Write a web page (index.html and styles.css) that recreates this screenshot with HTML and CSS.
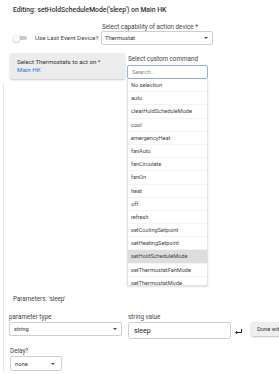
FILE: index.html
```html
<!DOCTYPE html>
<html>
<head>
<meta charset="utf-8">
<link rel="stylesheet" href="styles.css">
</head>
<body>
<div class="title">Editing: setHoldScheduleMode('sleep') on Main HK</div>
<div class="row1">
  <div class="toggle-wrap">
    <span class="toggle"><span class="knob"></span></span>
    <span class="tlabel">Use Last Event Device?</span>
  </div>
  <div class="field">
    <div class="label">Select capability of action device *</div>
    <div class="select sel-cap"><span>Thermostat</span><span class="caret"></span></div>
  </div>
</div>
<div class="row2">
  <div class="leftcol">
    <div class="card">
      <div class="card-title">Select Thermostats to act on *</div>
      <div class="card-link">Main HK</div>
    </div>
    <div class="rail"></div>
  </div>
  <div class="cmd">
    <div class="label">Select custom command</div>
    <div class="search">Search...</div>
    <ul class="list">
      <li>No selection</li>
      <li>auto</li>
      <li>clearHoldScheduleMode</li>
      <li>cool</li>
      <li>emergencyHeat</li>
      <li>fanAuto</li>
      <li>fanCirculate</li>
      <li>fanOn</li>
      <li>heat</li>
      <li>off</li>
      <li>refresh</li>
      <li>setCoolingSetpoint</li>
      <li>setHeatingSetpoint</li>
      <li class="active">setHoldScheduleMode</li>
      <li>setThermostatFanMode</li>
      <li>setThermostatMode</li>
    </ul>
  </div>
</div>
<div class="params">
  <div class="ptitle">Parameters: 'sleep'</div>
  <div class="prow">
    <div class="pfield">
      <div class="label">parameter type</div>
      <div class="select sel-type"><span>string</span><span class="caret"></span></div>
    </div>
    <div class="pfield">
      <div class="label">string value</div>
      <div class="input">sleep</div>
    </div>
    <svg class="enter" width="8" height="6" viewBox="0 0 8 6"><path d="M6.5 0 V3.5 H1.5" fill="none" stroke="#222" stroke-width="1"/><path d="M0 3.5 L2.2 1.8 V5.2 Z" fill="#222"/></svg>
    <div class="btn">Done with params</div>
  </div>
  <div class="dfield">
    <div class="label">Delay?</div>
    <div class="select sel-delay"><span>none</span><span class="caret"></span></div>
  </div>
</div>
</body>
</html>
```

FILE: styles.css
```css
html, body {
  margin: 0;
  padding: 0;
  overflow: hidden;
  background: #fff;
}
body {
  font-family: Roboto, "Liberation Sans", sans-serif;
  color: #333;
  width: 279px;
  height: 374px;
}
.title {
  padding: 5px 0 0 13px;
  font-size: 6.8px;
  font-weight: 500;
  line-height: 10px;
  color: #333;
  white-space: nowrap;
}
.label {
  font-size: 6.3px;
  line-height: 8px;
  color: #444;
  white-space: nowrap;
}
.row1 {
  display: flex;
  align-items: flex-end;
  margin-top: 8px;
}
.toggle-wrap {
  width: 88px;
  height: 14px;
  padding-left: 13px;
  display: flex;
  align-items: center;
  gap: 8px;
  box-sizing: content-box;
}
.toggle {
  position: relative;
  width: 14px;
  height: 7px;
  display: flex;
  align-items: center;
}
.toggle::before {
  content: "";
  display: block;
  margin-left: 3px;
  width: 11px;
  height: 4px;
  border-radius: 2px;
  background: #c9c9c9;
}
.knob {
  position: absolute;
  left: 0;
  top: 0;
  width: 7px;
  height: 7px;
  border-radius: 50%;
  background: #fafafa;
  box-shadow: 0 0.5px 1.5px rgba(0,0,0,0.35);
}
.tlabel {
  font-size: 6.2px;
  color: #444;
  white-space: nowrap;
}
.field .label {
  padding-left: 1px;
}
.select {
  box-sizing: border-box;
  height: 14px;
  border: 1px solid #cfcfcf;
  border-radius: 2px;
  background: #fff;
  display: flex;
  align-items: center;
  justify-content: space-between;
  padding: 0 4px 0 3px;
  font-size: 5.8px;
  color: #333;
}
.caret {
  width: 0;
  height: 0;
  border-left: 2px solid transparent;
  border-right: 2px solid transparent;
  border-top: 2.5px solid #444;
}
.sel-cap {
  width: 112px;
}
.row2 {
  display: flex;
  margin-top: 8px;
}
.leftcol {
  margin-left: 3px;
  display: flex;
  flex-direction: column;
}
.card {
  margin-left: 7px;
  width: 115px;
  height: 26px;
  box-sizing: border-box;
  background: #ececec;
  border-radius: 2px;
  box-shadow: 0 1px 2px rgba(0,0,0,0.22);
  padding: 5px 0 0 7px;
}
.card-title {
  font-size: 6.2px;
  line-height: 8px;
  color: #333;
  white-space: nowrap;
}
.card-link {
  font-size: 6.2px;
  line-height: 8px;
  color: #2b72d6;
}
.rail {
  flex: 1;
  border-left: 1px solid #e6e6e6;
  margin-top: 4px;
}
.cmd {
  margin-left: 2px;
  margin-top: 2px;
  width: 81px;
}
.cmd .label {
  line-height: 9px;
  padding-left: 1px;
  margin-bottom: 1px;
}
.search {
  box-sizing: border-box;
  height: 14px;
  border: 1px solid #8fb2e6;
  border-radius: 2px;
  font-size: 6.2px;
  color: #888;
  display: flex;
  align-items: center;
  padding-left: 4px;
}
.list {
  list-style: none;
  margin: 0;
  padding: 0;
  height: 207px;
  overflow: hidden;
  border: 1px solid #e2e2e2;
  border-top: none;
  box-shadow: 0 1px 2px rgba(0,0,0,0.12);
  box-sizing: border-box;
}
.list li {
  height: 13.2px;
  box-sizing: border-box;
  border-bottom: 1px solid #f3f3f3;
  font-size: 5.6px;
  line-height: 12.2px;
  padding-left: 3px;
  color: #444;
  white-space: nowrap;
}
.list li.active {
  background: #dddddd;
}
.params {
  margin-left: 3px;
  border-left: 1px solid #e6e6e6;
  padding: 9px 0 1px 5px;
  overflow: hidden;
}
.ptitle {
  padding-left: 4px;
  font-size: 6.3px;
  line-height: 8px;
  color: #444;
}
.prow {
  display: flex;
  align-items: flex-end;
  margin-top: 10px;
  white-space: nowrap;
}
.pfield .label {
  margin-bottom: 1px;
}
.sel-type {
  width: 113px;
  margin-bottom: 3px;
  padding-left: 4px;
}
.pfield + .pfield {
  margin-left: 6px;
}
.input {
  box-sizing: border-box;
  width: 103px;
  height: 17px;
  border: 1px solid #cfcfcf;
  border-radius: 3px;
  font-size: 7px;
  color: #222;
  display: flex;
  align-items: center;
  padding-left: 5px;
}
.enter {
  margin: 0 0 4px 4px;
  flex: none;
}
.btn {
  flex: none;
  margin-left: 8px;
  margin-bottom: 3px;
  height: 14px;
  box-sizing: border-box;
  padding: 0 6px;
  background: #eeeeee;
  border-radius: 2px;
  box-shadow: 0 1px 2px rgba(0,0,0,0.25);
  font-size: 5.8px;
  line-height: 14px;
  color: #333;
}
.dfield {
  margin-top: 8px;
  padding-left: 1px;
}
.dfield .label {
  margin-bottom: 1px;
}
.sel-delay {
  width: 52px;
  height: 15px;
  padding-left: 4px;
  padding-right: 6px;
}
```
